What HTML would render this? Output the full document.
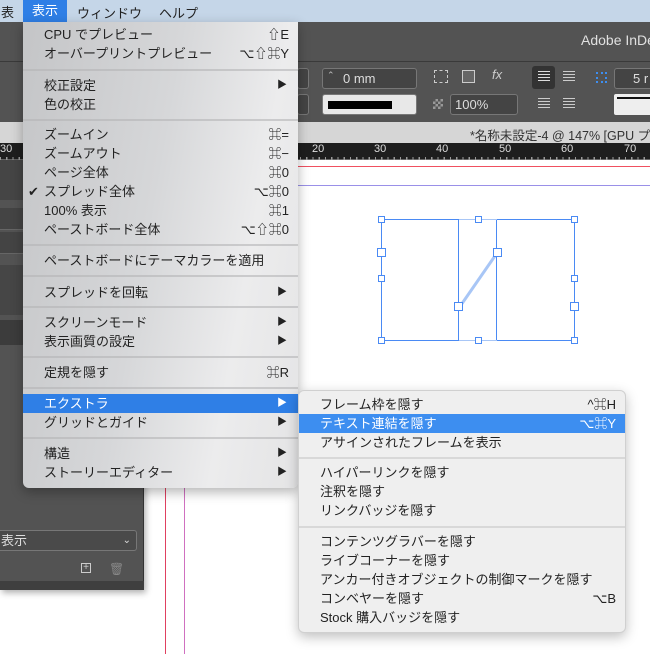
<!DOCTYPE html>
<html><head><meta charset="utf-8"><style>
*{margin:0;padding:0;box-sizing:border-box}
body{width:650px;height:654px;overflow:hidden;position:relative;background:#fff;font-family:"Liberation Sans","Noto Sans CJK JP",sans-serif;font-size:13px;color:#222}
.a{position:absolute}
.mi{position:absolute;left:0;right:0;height:19px;line-height:19px;padding-left:21px;white-space:nowrap}
.mi .k{position:absolute;right:9px;top:0}
.mi .r{position:absolute;right:11px;top:0;font-size:10px}
.sep{position:absolute;left:0;right:0;height:2px;background:#b4b4b6;opacity:.6}
.sm .sep{background:#d8d8d8;height:2px;opacity:1}
.hl{background:#2f7fe6;color:#fff}
.box{position:absolute;border:1px solid #777;border-radius:3px;background:#444}
.h{position:absolute;width:7px;height:7px;border:1px solid #4a8af4;background:#fff}
</style></head><body>
<!-- menubar -->
<div class="a" style="left:0;top:0;width:650px;height:22px;background:#c5d6e8"></div>
<div class="a" style="left:1px;top:2px;font-size:13px">表</div>
<div class="a" style="left:23px;top:0;width:44px;height:22px;background:#2f7fe6;color:#fff;line-height:22px;text-align:center">表示</div>
<div class="a" style="left:77px;top:3px">ウィンドウ</div>
<div class="a" style="left:159px;top:3px">ヘルプ</div>
<!-- title bar -->
<div class="a" style="left:0;top:22px;width:650px;height:40px;background:#535353"></div>
<div class="a" style="left:581px;top:32px;color:#e0e0e0;font-size:14px;white-space:nowrap">Adobe InDe</div>
<div class="a" style="left:0;top:61px;width:650px;height:1px;background:#3a3a3a"></div>
<!-- toolbar -->
<div class="a" style="left:0;top:62px;width:650px;height:60px;background:#535353"></div>
<div class="box" style="left:297px;top:68px;width:12px;height:21px"></div>
<div class="box" style="left:297px;top:94px;width:12px;height:21px"></div>
<div class="box" style="left:322px;top:68px;width:95px;height:21px;color:#ddd;line-height:19px;padding-left:20px;font-size:13px">0 mm</div>
<div class="a" style="left:327px;top:70px;color:#bbb;font-size:9px">⌃</div>
<div class="box" style="left:322px;top:94px;width:95px;height:21px;background:#e8e8e8"><div class="a" style="left:5px;top:6px;width:64px;height:8px;background:#000"></div></div>
<div class="a" style="left:434px;top:70px;width:14px;height:13px;border:1px dashed #ccc"></div>
<div class="a" style="left:462px;top:70px;width:13px;height:13px;border:1px solid #ccc;background:#666"></div>
<div class="a" style="left:492px;top:67px;color:#ccc;font-style:italic;font-size:13px">fx</div>
<div class="a" style="left:433px;top:99px;width:10px;height:10px;background:repeating-conic-gradient(#999 0 25%,#555 0 50%) 0 0/5px 5px"></div>
<div class="box" style="left:450px;top:94px;width:68px;height:21px;color:#ddd;line-height:19px;padding-left:4px">100%</div>
<div class="a" style="left:532px;top:66px;width:23px;height:23px;background:#333;border-radius:3px"></div>
<div class="a" style="left:538px;top:71px;width:12px;height:12px;background:repeating-linear-gradient(#ddd 0 1px,transparent 1px 3px)"></div>
<div class="a" style="left:563px;top:71px;width:12px;height:12px;background:repeating-linear-gradient(#ccc 0 1px,transparent 1px 3px)"></div>
<div class="a" style="left:538px;top:98px;width:12px;height:12px;background:repeating-linear-gradient(#ccc 0 1px,transparent 1px 3px)"></div>
<div class="a" style="left:563px;top:98px;width:12px;height:12px;background:repeating-linear-gradient(#ccc 0 1px,transparent 1px 3px)"></div>
<div class="a" style="left:596px;top:72px;width:11px;height:11px;border:2px dotted #3d8ef0"></div>
<div class="box" style="left:614px;top:68px;width:40px;height:21px;color:#ddd;line-height:19px;padding-left:18px">5 r</div>
<div class="a" style="left:614px;top:94px;width:40px;height:21px;background:#eee;border-radius:2px"><div class="a" style="left:3px;top:3px;width:40px;height:2px;background:#111"></div></div>
<!-- doc tab -->
<div class="a" style="left:0;top:122px;width:650px;height:21px;background:#d6d6d6"></div>
<div class="a" style="left:470px;top:125px;color:#333;font-size:12.5px;white-space:nowrap">*名称未設定-4 @ 147% [GPU プ</div>
<!-- ruler -->
<div class="a" style="left:0;top:143px;width:650px;height:17px;background:#1e1e1e;border-bottom:1px solid #666"></div>
<div class="a" style="left:0;top:157px;width:650px;height:3px;background:repeating-linear-gradient(90deg,#999 0 1px,transparent 1px 6.25px)"></div>
<div class="a" style="left:0;top:143px;color:#ddd;font-size:11px;width:650px">
<span class="a" style="left:0">30</span><span class="a" style="left:312px">20</span><span class="a" style="left:374px">30</span><span class="a" style="left:436px">40</span><span class="a" style="left:499px">50</span><span class="a" style="left:561px">60</span><span class="a" style="left:624px">70</span></div>
<!-- canvas guides -->
<div class="a" style="left:0;top:166px;width:650px;height:1px;background:#f05060"></div>
<div class="a" style="left:0;top:185px;width:650px;height:1px;background:#9a90e8"></div>
<div class="a" style="left:165px;top:160px;width:1px;height:494px;background:#e04060"></div>
<div class="a" style="left:184px;top:186px;width:1px;height:468px;background:#d070c0"></div>
<!-- frames -->
<div class="a" style="left:381px;top:219px;width:194px;height:122px;border:1px solid #4a8af4"></div>
<div class="a" style="left:458px;top:219px;width:39px;height:122px;border-left:1px solid #4a8af4;border-right:1px solid #4a8af4"></div>
<div class="a" style="left:459px;top:219px;width:38px;height:1px;background:#a8c6f6"></div>
<div class="a" style="left:459px;top:340px;width:38px;height:1px;background:#a8c6f6"></div>
<svg class="a" style="left:455px;top:248px" width="48" height="62"><line x1="6" y1="57" x2="42" y2="5" stroke="#a8c6f6" stroke-width="3"/></svg>
<div class="h" style="left:378px;top:216px"></div><div class="h" style="left:475px;top:216px"></div><div class="h" style="left:571px;top:216px"></div>
<div class="h" style="left:378px;top:275px"></div><div class="h" style="left:571px;top:275px"></div>
<div class="h" style="left:378px;top:337px"></div><div class="h" style="left:475px;top:337px"></div><div class="h" style="left:571px;top:337px"></div>
<div class="h" style="left:377px;top:248px;width:9px;height:9px"></div>
<div class="h" style="left:570px;top:302px;width:9px;height:9px"></div>
<div class="h" style="left:493px;top:248px;width:9px;height:9px"></div>
<div class="h" style="left:454px;top:302px;width:9px;height:9px"></div>
<!-- left panel -->
<div class="a" style="left:0;top:160px;width:144px;height:430px;background:#535353;border-right:1px solid #333;box-shadow:2px 3px 6px rgba(0,0,0,.3)"></div>
<div class="a" style="left:0;top:160px;width:144px;height:40px;background:#454545"></div>
<div class="a" style="left:0;top:208px;width:144px;height:22px;background:#444;border-bottom:1px solid #666"></div>
<div class="a" style="left:0;top:232px;width:144px;height:22px;background:#444;border-bottom:1px solid #666"></div>
<div class="a" style="left:0;top:265px;width:144px;height:50px;background:#464646"></div>
<div class="a" style="left:0;top:320px;width:144px;height:25px;background:#3c3c3c"></div>
<div class="box" style="left:-4px;top:530px;width:141px;height:21px;background:#4a4a4a;color:#ddd;line-height:19px;padding-left:4px">表示<span class="a" style="right:5px;top:0;font-size:10px">⌄</span></div>
<div class="a" style="left:81px;top:563px;width:10px;height:10px;border:1px solid #ccc;color:#ccc;font-size:10px;line-height:8px;text-align:center">+</div>
<div class="a" style="left:109px;top:562px;color:#888;font-size:12px">🗑</div>
<div class="a" style="left:0;top:581px;width:144px;height:9px;background:#3f3f3f"></div>
<!-- main menu -->
<div class="a" style="left:23px;top:22px;width:275px;height:466px;background:linear-gradient(100deg,#c4c5c7 0%,#d6d7d9 45%,#ececed 75%,#e4e4e5 100%);border-radius:0 0 6px 6px;box-shadow:0 4px 12px rgba(0,0,0,.3)">
<div class="mi" style="top:3px">CPU でプレビュー<span class="k">⇧E</span></div>
<div class="mi" style="top:22px">オーバープリントプレビュー<span class="k">⌥⇧⌘Y</span></div>
<div class="sep" style="top:47px"></div>
<div class="mi" style="top:54px">校正設定<span class="r">▶</span></div>
<div class="mi" style="top:73px">色の校正</div>
<div class="sep" style="top:97px"></div>
<div class="mi" style="top:103px">ズームイン<span class="k">⌘=</span></div>
<div class="mi" style="top:122px">ズームアウト<span class="k">⌘−</span></div>
<div class="mi" style="top:141px">ページ全体<span class="k">⌘0</span></div>
<div class="mi" style="top:160px"><span class="a" style="left:5px">✔</span>スプレッド全体<span class="k">⌥⌘0</span></div>
<div class="mi" style="top:179px">100% 表示<span class="k">⌘1</span></div>
<div class="mi" style="top:198px">ペーストボード全体<span class="k">⌥⇧⌘0</span></div>
<div class="sep" style="top:222px"></div>
<div class="mi" style="top:229px">ペーストボードにテーマカラーを適用</div>
<div class="sep" style="top:253px"></div>
<div class="mi" style="top:261px">スプレッドを回転<span class="r">▶</span></div>
<div class="sep" style="top:284px"></div>
<div class="mi" style="top:291px">スクリーンモード<span class="r">▶</span></div>
<div class="mi" style="top:310px">表示画質の設定<span class="r">▶</span></div>
<div class="sep" style="top:334px"></div>
<div class="mi" style="top:341px">定規を隠す<span class="k">⌘R</span></div>
<div class="sep" style="top:365px"></div>
<div class="mi hl" style="top:372px">エクストラ<span class="r">▶</span></div>
<div class="mi" style="top:391px">グリッドとガイド<span class="r">▶</span></div>
<div class="sep" style="top:415px"></div>
<div class="mi" style="top:422px">構造<span class="r">▶</span></div>
<div class="mi" style="top:441px">ストーリーエディター<span class="r">▶</span></div>
</div>
<!-- submenu -->
<div class="a sm" style="left:298px;top:390px;width:328px;height:243px;background:#efefef;border:1px solid #d0d0d0;border-radius:6px;box-shadow:0 4px 12px rgba(0,0,0,.25)">
<div class="mi" style="top:4px">フレーム枠を隠す<span class="k">^⌘H</span></div>
<div class="mi hl" style="top:23px;background:#3d8ef0">テキスト連結を隠す<span class="k">⌥⌘Y</span></div>
<div class="mi" style="top:42px">アサインされたフレームを表示</div>
<div class="sep" style="top:66px"></div>
<div class="mi" style="top:72px">ハイパーリンクを隠す</div>
<div class="mi" style="top:91px">注釈を隠す</div>
<div class="mi" style="top:110px">リンクバッジを隠す</div>
<div class="sep" style="top:135px"></div>
<div class="mi" style="top:141px">コンテンツグラバーを隠す</div>
<div class="mi" style="top:160px">ライブコーナーを隠す</div>
<div class="mi" style="top:179px">アンカー付きオブジェクトの制御マークを隠す</div>
<div class="mi" style="top:198px">コンベヤーを隠す<span class="k">⌥B</span></div>
<div class="mi" style="top:217px">Stock 購入バッジを隠す</div>
</div>
</body></html>
